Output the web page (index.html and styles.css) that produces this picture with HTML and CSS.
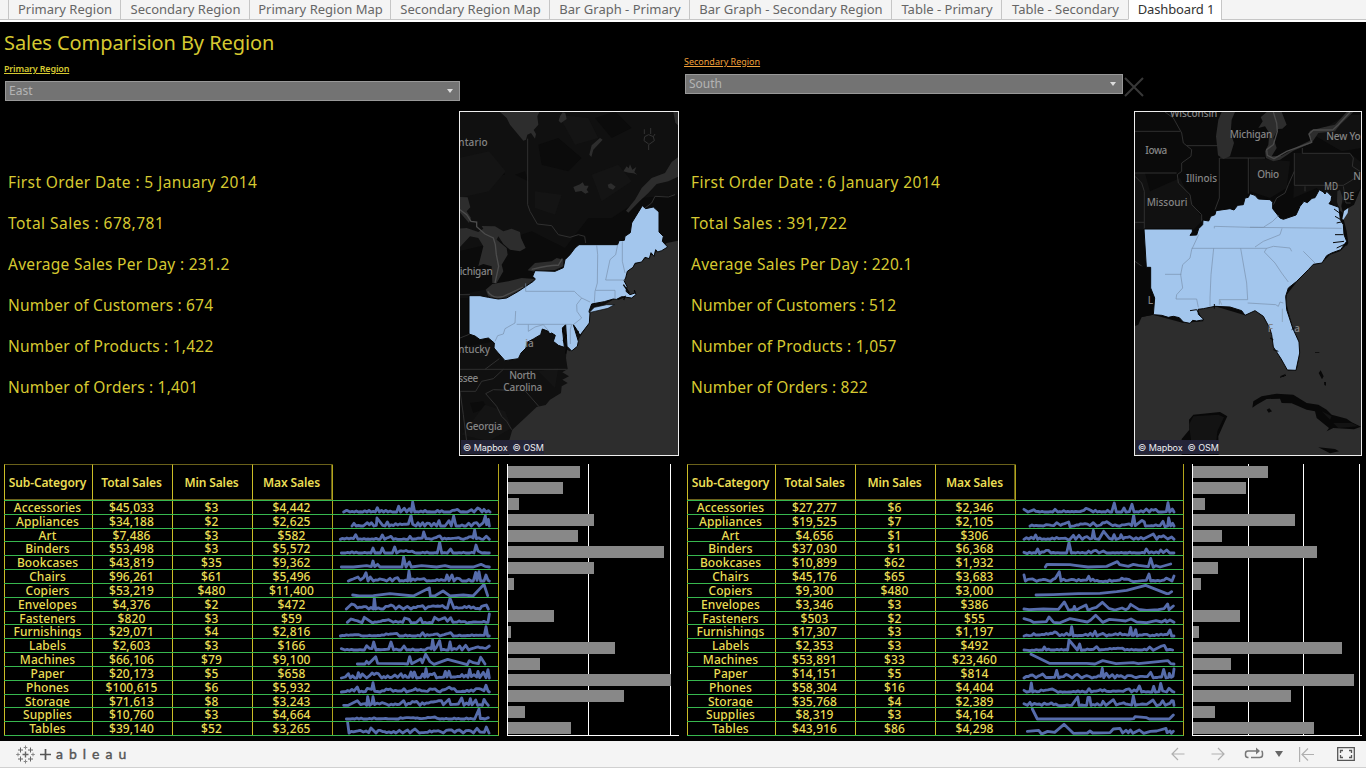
FILE: index.html
```html
<!DOCTYPE html>
<html lang="en">
<head>
<meta charset="utf-8">
<title>Sales Comparision By Region</title>
<link rel="stylesheet" href="styles.css">
</head>
<body>
<nav class="tabs">
  <span class="tab" style="width:112px">Primary Region</span>
  <span class="tab" style="width:129px">Secondary Region</span>
  <span class="tab" style="width:141px">Primary Region Map</span>
  <span class="tab" style="width:159px">Secondary Region Map</span>
  <span class="tab" style="width:140px">Bar Graph - Primary</span>
  <span class="tab" style="width:202px">Bar Graph - Secondary Region</span>
  <span class="tab" style="width:110px">Table - Primary</span>
  <span class="tab" style="width:127px">Table - Secondary</span>
  <span class="tab active" style="width:94px">Dashboard 1</span>
  <span class="tab-rest"></span>
</nav>

<main class="dash">
  <section class="half primary">
    <header class="head">
      <h1 class="title">Sales Comparision By Region</h1>
      <div class="label">Primary Region</div>
      <div class="select"><span>East</span><i class="caret"></i></div>
    </header>
    <div class="overview">
      <ul class="stats">
        <li>First Order Date : 5 January 2014</li><li>Total Sales : 678,781</li><li>Average Sales Per Day : 231.2</li><li>Number of Customers : 674</li><li>Number of Products : 1,422</li><li>Number of Orders : 1,401</li>
      </ul>
      <div class="map">
        <svg width="218" height="343" viewBox="15 12 654 1029">
          <rect x="0" y="0" width="700" height="1050" fill="#101010"/>
          <path fill="#0b0b0b" d="M12 430L140 400 230 370 330 420 400 330 470 330 560 270 672 260V400L380 470 220 520 12 560ZM250 110l60-20 70 60-40 40-80-20ZM420 30l60-20 50 50-60 30ZM100 170l40 5 10 25-35 5ZM180 200l30-10 10 30ZM12 570H120V700L12 720ZM45 885l40-5 10 20-40 15Z"/>
          <path fill="#141414" d="M12 150l90-20 50 60-50 60-90 20ZM310 20l90 10 30 60-70 20ZM410 200l80-30 40 50-90 60ZM240 250l80 10-20 60-60-20ZM90 890l60 20 20 50-70 40-80-20ZM250 790l60-10-10 60Z"/>
          <g fill="#2d2d2d">
            <path d="M135 12L155 30 165 50 190 80 205 98 213 95 217 80 228 75 240 92 243 78 236 66 250 50 247 25 253 12Z"/>
            <path d="M12 267L38 268 46 298 35 310 48 330 42 345 12 310Z"/>
            <path d="M12 362L35 360 70 372 85 362 80 354 120 355 145 370 170 362 195 372 198 390 212 420 195 430 165 425 145 408 130 385 125 395 155 420 158 440 140 470 145 490 125 525H112L110 475 85 468 70 474 80 435 85 415 70 390 45 385 12 420Z"/>
            <path d="M218 487L240 465 290 460 305 450 325 455 325 475 300 486 240 491ZM92 545L112 528 160 520 200 510 240 513 205 540 155 570 125 573 100 565Z"/>
            <path d="M669 148L650 162 630 195 590 210 560 240 540 275 513 308 520 314 555 278 580 255 605 228 640 220 672 205Z"/>
            <path d="M403 140L410 112 435 90 443 95 415 125 409 147ZM315 25l8-12 8 2 4 18-17 12-7-7ZM355 237l20-8 8-6 6 10 12 0-6 12 6 8-10 4-12-8-18 3ZM505 190l10-15 6 6 4-12 7 16 12-8-6 15 9 8-12-4-14-2ZM458 230l10-4 14 10-8 9-13-5ZM655 12l14 0v40l-8-8Z"/>
            <path d="M672 398L635 405 600 435 530 475 510 500 510 540 500 560 405 615 398 650 370 695 345 730 335 725 333 750 338 783 322 793 342 805 322 815 338 825 320 835 318 855 285 875 272 891 245 897 210 930 172 965 162 1000V1050H690V398Z"/>
          </g>
          <g fill="none" stroke="#4c4c4c" stroke-width="4"><path d="M12 303L35 320 48 340 65 342 65 356 90 378 115 390 121 410 124 440 131 475 120 525M98 550Q112 574 145 565L205 537M230 484Q290 470 310 472L322 452"/><path stroke="#333" stroke-width="3" d="M581 108l-14-10 2-12 12-6 14 6 3 12-17 12v16M568 78v-14M587 78v-18M595 86l5-8"/></g>
          <g fill="none" stroke="#303030" stroke-width="3"><path d="M218 92V290L225 310 247 348 290 353 310 380 345 388 370 380 389 385 392 405M570 300L590 285 600 265 640 267 660 260M15 784H335M15 850H62L80 820 115 812 145 784M90 784L133 752M92 857L115 845 210 848 252 896M92 857L125 895 140 925 155 940 170 965M15 850L25 920 35 1000M15 560H45M15 690L45 678"/></g>
          <path fill="#a3c6ed" stroke="#070707" stroke-width="3" d="M372 410H488L492 398 508 397 510 385 526 374 530 345 562 293 572 302 595 297 612 312V372L625 385 622 400 638 417 620 428 608 432 602 425 597 445 588 434 583 452 570 448 560 462 540 466 534 478 517 490 512 510 507 518 516 535 513 550 525 560 540 555 538 546 543 560 530 570 500 566 485 574 475 573 448 581 410 588 402 610 405 615 403 645 375 682 363 661 355 650 370 700 367 715 350 729 336 715 332 650 322 660 328 718 310 712 295 700 301 682 290 675 284 678 280 670 262 663 257 680 235 693 216 703 213 720 198 735 190 752 150 758 128 733 117 720 118 705 100 690 75 695 60 684 42 678V563H75L100 568 130 573 155 570 190 550 235 520 241 513 233 505 240 488 300 490 325 479 330 455 345 440 360 420Z"/>
          <path fill="#a3c6ed" stroke="#070707" stroke-width="2" d="M402 614L418 598 455 590 478 590 459 601Z"/>
          <path fill="none" stroke="#060606" stroke-width="4" d="M330 655l-7 15 10 12-8 15 10 20-3 20M488 574l22-8-4 10M505 530l18 25M363 675l8-5"/>
          <path fill="none" stroke="#7990aa" stroke-width="2" d="M425 411L428 440 427 525M488 410L482 440 465 455 452 516H510M502 400V460L510 495M427 525L420 550 418 585M422 547H480V571M212 526V550H358L368 560 380 570 405 582M380 570L365 590 366 610 380 630 355 650M185 649H350L346 665V708M220 650V670L240 657 265 650 282 670M182 609L180 645 150 662 145 678 128 683 120 700"/>
          <g class="map-text"><text x="10" y="115" textLength="88">ntario</text><text x="14" y="500" textLength="99">ichigan</text><text x="10" y="736" textLength="95">ntucky</text><text x="10" y="821" textLength="60">ssee</text><text x="163" y="813" textLength="80">North</text><text x="145" y="849" textLength="117">Carolina</text><text x="32" y="966" textLength="110">Georgia</text><text x="211" y="717">ia</text></g>
        </svg>
        <div class="credit"><span>© Mapbox</span><span>© OSM</span></div>
      </div>
    </div>
    <div class="lower"><div class="grid" id="gridEast"></div><div class="chart" id="chartEast"></div></div>
  </section>

  <section class="half secondary">
    <header class="head">
      <div class="label">Secondary Region</div>
      <div class="select-row"><div class="select"><span>South</span><i class="caret"></i></div>
      <svg class="close" width="20" height="20" viewBox="0 0 20 20"><path d="M1 1L19 19M19 1L1 19" stroke="#383838" stroke-width="2" fill="none"/></svg></div>
    </header>
    <div class="overview">
      <ul class="stats">
        <li>First Order Date : 6 January 2014</li><li>Total Sales : 391,722</li><li>Average Sales Per Day : 220.1</li><li>Number of Customers : 512</li><li>Number of Products : 1,057</li><li>Number of Orders : 822</li>
      </ul>
      <div class="map">
        <svg width="226" height="343" viewBox="15 12 678 1029">
          <rect x="0" y="0" width="710" height="1050" fill="#0a0a0a"/>
          <path fill="#111" d="M15 195H45L60 250 150 210 190 290 220 335 190 365H15ZM495 135H660L695 165V240L620 300 560 240 490 270ZM360 150L480 160 470 240 420 270 360 250ZM550 80l100-60h45v100l-60 10Z"/>
          <g fill="#2d2d2d">
            <path d="M695 235L672 290 655 300 640 330 650 370 655 405 630 430 600 440 575 465 545 470 530 490 500 522 470 560 468 580 475 610 510 735 500 785 475 788 450 750 422 660 400 625 375 608 345 622 255 595 200 600 220 640 160 645 70 620 35 627 25 650 12 655V1050H700Z"/>
            <path d="M275 12H315L305 35 302 75 312 105 300 145 280 153 264 142 258 85 265 35ZM385 60L398 40 392 28 410 12H455L470 50 457 62 444 63 430 90 440 120 425 145 455 143 505 115 545 95 535 80 540 68 580 58 615 50 650 12H670L630 50 615 70 565 75 545 105 490 128 450 155 430 160 408 150 405 130 415 110 418 75 405 55Z"/>
            <path d="M622 250l8-5 8 25-4 25 5 20-10-8-8-25Z"/>
          </g>
          <path fill="none" stroke="#4b4b4b" stroke-width="4" d="M430 12L440 45 442 70 430 110 410 125 412 142 432 152 470 130 545 103 537 78 550 66H608L625 50 660 12"/>
          <g fill="none" stroke="#303030" stroke-width="3"><path d="M15 70H150M105 12L130 30 155 75 160 105 185 125 183 145 155 165 155 190 142 200 145 225 180 260 185 290 215 320 215 340M15 195H140M170 113H265M268 150V270L255 305M15 205L35 225 43 250V363M270 150H405M355 150V257M493 135V232M493 190L475 230 465 255 440 270 430 290M517 120V136H660L670 150 667 175 690 190M493 232H640L660 220 675 210M525 235V250M640 235L648 285H662M15 343H43M15 460L40 478"/></g>
          <g fill="#080808"><path d="M12 475H62V540L75 570 70 620 35 627 15 650Z"/>
          <path d="M155 993L178 965 177 935 190 920 270 912 292 925 285 940 265 985 266 1044H155Z"/>
          <path d="M367 899L370 880 395 865 440 857 490 860 530 885 565 890 590 905 605 920 650 932 665 943 693 956 672 964 610 960 590 970 597 960 560 930 555 910 530 905 485 886 455 885 450 872 410 873 380 890ZM410 905l8-4 8 9-10 4ZM565 1018L615 1023 627 1030 600 1036ZM566 795l6-8 9 18-5 9ZM582 822l6 0 0 11-5-2ZM555 732h13v2h-13ZM600 738v8M450 805l18-8-8 10Z"/></g>
          <path fill="#131313" d="M190 925L265 920 282 928 262 970 258 1010 185 1010 177 950ZM575 910l30 15-5 10ZM610 945l55 0 20 10-60 5Z"/>
          <path fill="#a3c6ed" stroke="#070707" stroke-width="3" d="M42 363H187V372L180 382 200 381 206 362 218 350 219 336 236 339 242 325 255 320 258 308 300 302 312 306 323 292 340 290 345 270 355 268 360 257 375 262 385 273 420 275 428 283 428 302 450 330 460 334 498 321 510 295 522 280 532 284 546 271 555 269 568 245 580 252 585 258 590 250 605 265 603 279 597 287 627 298 631 335 640 350 642 380 650 400 632 425 605 435 590 443 576 465 550 469 535 485 500 520 475 540 467 565 470 605 488 660 507 702 509 735 498 787 472 786 453 752 430 717 425 680 419 660 400 625 375 608 345 622 335 608 300 597 255 595 220 602 204 604 205 619 222 635 200 639 188 637 180 646 160 642 148 629 130 625 115 628 95 622 70 620 74 570 62 540V478H49Z"/>
          <path fill="#a3c6ed" d="M637 333l5-24 13-9-2 15-13 20Z"/>
          <path fill="none" stroke="#070707" stroke-width="3" d="M612 303l18 13M615 325l16 9M620 345l18-4M615 380h25M609 404l33-4M620 420l32-15-2 8M180 608l20-3 7 12M253 588v14M420 690l10 5M430 725l15 5M485 665l8-6M450 808l18-6"/>
          <path fill="none" stroke="#7990aa" stroke-width="2" d="M253 361V355L360 358H400L428 340 445 323M360 358L635 361M456 361L450 380 400 400 375 417M185 421H410L430 415 480 420 485 430M520 430L555 465M410 421L403 432 435 465 455 495 475 522M206 380L185 425 180 450 158 470 152 500 158 540 140 560 138 573H200L205 598M105 499H154M251 421L243 500 240 570V595M332 421L350 525 353 575H268V590M353 585L437 590 445 595 450 582 460 585"/>
          <path fill="none" stroke="#8fa8c1" stroke-width="3" d="M268 573L275 590M457 602v40"/>
          <g class="map-text"><text x="120" y="26" textLength="142">Wisconsin</text><text x="299" y="89" textLength="128">Michigan</text><text x="589" y="95" textLength="103">New Yo</text><text x="46" y="138" textLength="66">Iowa</text><text x="168" y="222" textLength="93">Illinois</text><text x="382" y="211" textLength="65">Ohio</text><text x="50" y="294" textLength="122">Missouri</text><text x="583" y="245" textLength="41" lengthAdjust="spacingAndGlyphs">MD</text><text x="640" y="277" textLength="32" lengthAdjust="spacingAndGlyphs">DE</text><text x="670" y="216">N.</text><text x="53" y="587">L</text><text x="413" y="671">F</text><text x="493" y="671">a</text></g>
        </svg>
        <div class="credit"><span>© Mapbox</span><span>© OSM</span></div>
      </div>
    </div>
    <div class="lower"><div class="grid" id="gridSouth"></div><div class="chart" id="chartSouth"></div></div>
  </section>
</main>

<footer class="bar">
  <svg class="mark" width="19" height="19" viewBox="0 0 19 19" fill="none" stroke="#666" stroke-width="1"><path stroke-width="1.400" d="M9.5 6.500v6M6.500 9.500h6"/><path d="M4.500 2.500v5M2 5h5M14.500 2.500v5M12 5h5M4.500 11.500v5M2 14h5M14.500 11.500v5M12 14h5"/><path stroke="#888" d="M9.500 .5v4M7.700 2.500h3.600M9.500 14.500v4M7.700 16.500h3.600M2 7.700v3.600M.2 9.500h3.600M17 7.700v3.600M15.200 9.500h3.600"/></svg>
  <svg class="plus" width="11" height="11" viewBox="0 0 11 11"><path d="M5.500 0v11M0 5.500h11" stroke="#555" stroke-width="1.700"/></svg>
  <span class="word">ableau</span>
  <div class="tools">
    <svg width="14" height="14" viewBox="0 0 14 14" fill="none" stroke="#b0b0b0"><path stroke-width="1.2" d="M13.500 7H1M7 1L1 7l6 6"/></svg>
    <svg width="14" height="14" viewBox="0 0 14 14" fill="none" stroke="#b0b0b0"><path stroke-width="1.2" d="M.5 7H13M7 1l6 6-6 6"/></svg>
    <svg width="20" height="14" viewBox="0 0 20 14" fill="none" stroke="#777"><path stroke-width="1.500" d="M4.500 10.500H4Q1.500 10.500 1.500 8V6.500Q1.500 4 4 4H13M7 10.500H15.500Q18.500 10.500 18.500 8V6Q18.500 4.500 17.500 4"/><path fill="#777" stroke="none" d="M12 .5l4 3.500-4 3.500z"/></svg>
    <svg width="8" height="6" viewBox="0 0 8 6"><path d="M0 0h8L4 6z" fill="#666"/></svg>
    <svg width="15" height="15" viewBox="0 0 15 15" fill="none" stroke="#b0b0b0"><path stroke-width="1.2" d="M.6 0v15M15 7.500H3M9 1.500L3 7.500l6 6"/></svg>
    <svg width="18" height="14" viewBox="0 0 18 14" fill="none" stroke="#555"><path stroke-width="1.300" d="M.7 .7h16.600v12.600H.7zM3.500 6V3.500H6M12 3.500h2.500V6M14.500 8v2.500H12M6 10.500H3.500V8"/></svg>
  </div>
</footer>
<script src="app.js"></script>
</body>
</html>
```

FILE: styles.css
```css
* { box-sizing: border-box; }
body { margin: 0; width: 1366px; height: 768px; overflow: hidden; background: #000; font-family: "Noto Sans", "Open Sans", sans-serif; display: flex; flex-direction: column; }
.tabs { height: 22px; background: #fff; display: flex; padding-bottom: 2px; padding-left: 0; }
.tabs::before { content: ""; width: 8px; background: #f4f4f4; border-bottom: 1px solid #c6c6c6; }
.tab { flex: none; height: 20px; background: #f4f4f4; border-left: 1px solid #c6c6c6; border-bottom: 1px solid #c6c6c6; color: #666; font-size: 13px; line-height: 18px; text-align: center; white-space: nowrap; padding-left: 1px; }
.tab.active { background: #fff; border-bottom-color: #fff; color: #333; letter-spacing: -.15px; }
.tab-rest { flex: 1; background: #f4f4f4; border-left: 1px solid #c6c6c6; border-bottom: 1px solid #c6c6c6; margin-left: -1px; }

.dash { height: 719px; display: flex; background: #000; color: #d6c931; }
.half { display: flex; flex-direction: column; }
.primary { width: 683px; padding-left: 4px; }
.secondary { width: 683px; padding-left: 4px; }
.head { height: 89px; }
.title { margin: 0; padding-top: 7px; height: 41px; font-size: 20px; font-weight: 400; line-height: 28px; letter-spacing: -.07px; white-space: nowrap; }
.label { font-size: 9px; line-height: 12px; font-weight: 600; letter-spacing: -.17px; text-decoration: underline; white-space: nowrap; }
.primary .label { height: 18px; }
.secondary .head { padding-top: 33px; margin-left: -3px; }
.secondary .label { color: #f0a03a; font-weight: 400; letter-spacing: 0; height: 18px; line-height: 14px; }
.select { display: flex; align-items: center; justify-content: space-between; width: 455px; height: 20px; margin-left: 1px; border: 1px solid #999; background: #737373; color: #b4b4b4; font-size: 12px; line-height: 18px; padding: 0 6px 0 3px; }
.secondary .select { width: 438px; }
.select-row { display: flex; align-items: flex-start; padding-top: 1px; }
.close { margin-top: 3px; margin-left: 1px; }
.caret { border: 3.5px solid transparent; border-top: 4px solid #ddd; border-bottom: 0; }

.overview { height: 345px; display: flex; justify-content: space-between; }
.stats { list-style: none; margin: 0; padding: 51px 0 0 4px; font-size: 15.500px; line-height: 41px; white-space: nowrap; }
.stats li:nth-child(1) { letter-spacing: .39px; }
.stats li:nth-child(2) { letter-spacing: .48px; }
.stats li:nth-child(3) { letter-spacing: .29px; }
.stats li:nth-child(4) { letter-spacing: .17px; }
.stats li:nth-child(5) { letter-spacing: .23px; }
.stats li:nth-child(6) { letter-spacing: .2px; }
.map { position: relative; width: 220px; height: 345px; border: 1px solid #eee; }
.primary .overview { padding-right: 4px; }
.secondary .map { width: 228px; }
.secondary .overview { padding-right: 4px; }
.map svg { display: block; }
.map-text { fill: #858585; font-size: 30px; font-weight: 500; }
.credit { position: absolute; left: 1px; bottom: 1px; width: 83px; height: 14px; display: flex; gap: 5px; padding-left: 2px; background: #242438; color: #eee; font: 9px/15px Inter, sans-serif; letter-spacing: -.06px; white-space: nowrap; }

.lower { display: flex; height: 285px; padding-top: 8px; }
.grid { width: 495px; height: 272px; display: flex; flex-direction: column; }
.secondary .grid { width: 497px; }
.row { display: grid; grid-template-columns: 88px 80px 80px 80px 1fr; border-bottom: 1px solid #37b84e; color: #eade55; font-size: 12px; font-weight: 500; line-height: 13px; letter-spacing: .08px; text-align: center; border-right: 1px solid #b3a51b; }
.cell { border-left: 1px solid #cbbd26; height: 100%; overflow: hidden; min-width: 0; padding-right: 2px; }
.row .spark { border-left-color: #b3a51b; padding: 0; }
.row.th { height: 37px; font-weight: 600; font-size: 12px; letter-spacing: -.12px; }
.th .cell { border-top: 1px solid #6a611a; box-shadow: inset 0 -1px #6a611a; line-height: 36px; }
.th .cell:nth-child(4) { box-shadow: inset -1px -1px #6a611a; }
.th .spark { border-top-color: transparent; box-shadow: none; }
.spark svg { display: block; }
.spark polyline { fill: none; stroke: #566cab; stroke-width: 8.500; stroke-linejoin: round; stroke-linecap: round; }

.chart { margin-left: 8px; height: 272px; width: 172px; border-left: 1px solid #fff; border-bottom: 1px solid #fff; padding-top: 2px; display: flex; flex-direction: column; gap: 4px; background: linear-gradient(#fff, #fff) 80px 0 / 1px 100% no-repeat, linear-gradient(#fff, #fff) 162px 0 / 1px 100% no-repeat; }
.secondary .chart { width: 170px; background: linear-gradient(#fff, #fff) 55px 0 / 1px 100% no-repeat, linear-gradient(#fff, #fff) 110px 0 / 1px 100% no-repeat, linear-gradient(#fff, #fff) 166px 0 / 1px 100% no-repeat; }
.hbar { height: 12px; flex: none; background: #888; }

.bar { height: 27px; flex: none; background: #f4f4f4; border-bottom: 1px solid #d0d0d0; display: flex; align-items: center; padding-left: 16px; }
.plus { margin-left: 5px; }
.word { margin-left: 5px; font: 14px/24px Lato, sans-serif; letter-spacing: 6px; color: #555; -webkit-text-stroke: .4px #555; }
.tools { margin-left: auto; display: flex; align-items: center; padding-right: 11px; }
.tools svg:nth-child(2) { margin-left: 26px; }
.tools svg:nth-child(3) { margin-left: 19px; }
.tools svg:nth-child(4) { margin-left: 11px; }
.tools svg:nth-child(5) { margin-left: 16px; }
.tools svg:nth-child(6) { margin-left: 23px; }
```

FILE: app.js
```js
const heights = [14, 14, 13, 14, 14, 14, 14, 14, 13, 14, 14, 14, 14, 14, 13, 14, 14];
const names = ['Accessories', 'Appliances', 'Art', 'Binders', 'Bookcases', 'Chairs', 'Copiers', 'Envelopes', 'Fasteners', 'Furnishings', 'Labels', 'Machines', 'Paper', 'Phones', 'Storage', 'Supplies', 'Tables'];

const east = {
  total: ['45,033', '34,188', '7,486', '53,498', '43,819', '96,261', '53,219', '4,376', '820', '29,071', '2,603', '66,106', '20,173', '100,615', '71,613', '10,760', '39,140'],
  min: [3, 2, 3, 3, 35, 61, 480, 2, 3, 4, 3, 79, 5, 6, 8, 3, 52],
  max: ['4,442', '2,625', '582', '5,572', '9,362', '5,496', '11,400', '472', '59', '2,816', '166', '9,100', '658', '5,932', '3,243', '4,664', '3,265'],
  bars: [72, 55, 11, 86, 70, 156, 86, 6, 0, 46, 3, 107, 32, 163, 116, 17, 63],
  origin: 9,
  // Each series: jitter amplitude, then "x,height" points along the baseline.
  lines: [
    [3, '41,0 50,5 60,0 136,0 142,13 148,0 200,0 206,17 212,0 223,11 230,0 238,10 244,0 248,30 254,0 360,0 382,8 392,0 412,0 424,7 432,0 443,12 450,8 456,0 462,8 468,0 475,4 480,0'],
    [3, '66,0 72,8 78,0 100,0 112,10 118,4 124,10 132,0 139,2 141,24 158,2 165,0 172,12 178,0 235,6 243,32 248,5 258,0 264,10 270,0 278,10 284,0 298,8 304,0 312,8 320,0 327,16 332,0 345,0 357,16 364,0 371,30 378,0 408,0 416,8 424,0 440,10 448,0 460,10 466,30 470,4 475,20 478,0'],
    [2, '31,0 70,2 77,14 84,0 150,0 157,13 164,0 183,9 190,0 234,0 240,9 246,0 277,4 281,22 288,2 305,0 330,10 337,0 380,4 400,0 424,8 429,4 434,28 439,2 460,0 469,9 478,0'],
    [2, '34,0 123,0 129,15 135,0 151,0 157,15 164,0 187,0 194,18 200,0 210,6 240,4 260,0 322,0 329,32 335,0 352,0 362,12 369,0 432,0 438,24 444,6 456,0 478,0'],
    [0, '34,0 70,0 110,4 124,1 129,18 134,1 143,8 150,0 216,0 221,30 228,0 238,15 244,0 275,4 320,0 345,4 362,0 412,0 430,0 453,8 465,2 478,0'],
    [3, '55,0 84,12 91,3 101,10 108,25 114,0 121,12 130,0 155,5 170,0 180,8 187,0 203,10 209,0 233,0 237,30 242,0 282,7 290,0 346,2 351,18 357,1 366,18 372,0 388,7 396,0 430,0 437,26 441,2 447,28 452,0 462,0 468,18 474,2 478,0'],
    [0, '68,0 88,-3 130,-2 180,4 250,-3 298,21 301,-3 315,-2 339,12 360,-3 400,0 429,-3 462,32 473,-2'],
    [3, '49,0 65,15 82,3 108,7 116,0 130,0 133,34 137,0 160,0 183,12 197,0 207,9 220,0 232,8 243,0 278,10 286,0 303,8 330,8 352,2 360,32 372,2 410,4 450,0 455,8 469,12 475,0'],
    [2, '52,0 63,10 96,-1 103,15 128,-2 176,8 190,0 218,0 224,13 237,9 244,-2 260,0 272,12 278,-2 306,-2 314,15 326,7 345,14 352,3 362,14 369,0 405,2 412,-3 430,1 474,0 478,25'],
    [2, '31,0 80,4 100,0 150,1 200,8 208,0 270,0 278,10 285,0 322,6 330,0 362,10 370,0 463,2 468,28 473,0 478,0'],
    [2, '34,4 45,0 103,0 110,13 118,5 126,4 131,24 138,0 170,2 176,3 183,24 191,0 213,0 222,12 230,0 285,0 300,6 304,3 308,30 313,0 319,8 329,28 334,0 355,0 360,24 365,0 380,2 389,12 396,0 407,14 416,0 438,8 468,5 478,12'],
    [0, '82,0 105,0 110,8 116,1 137,22 143,2 220,1 233,0 239,22 245,1 272,15 277,4 287,29 300,7 312,-1 353,14 412,-2 418,10 430,4 445,1 452,20 465,0'],
    [6, '34,0 46,3 55,13 61,0 81,0 85,16 91,2 97,12 110,0 120,8 145,13 155,0 185,2 195,9 203,2 213,13 219,2 237,2 243,18 248,2 253,18 260,0 284,2 288,28 293,3 313,14 320,0 341,3 346,20 351,3 357,20 363,2 390,4 414,2 419,26 424,4 440,3 444,20 449,1 460,17 468,1 474,25 478,0'],
    [3, '34,0 72,3 82,15 88,0 106,1 112,11 125,8 129,28 134,2 150,0 181,9 190,2 215,3 222,10 230,0 250,6 293,2 307,8 330,0 350,10 365,9 380,1 430,2 447,10 462,4 468,20 474,3 478,0'],
    [4, '41,0 55,0 82,14 92,2 106,5 110,0 113,26 119,0 126,5 129,26 134,2 163,6 177,0 208,3 221,14 228,0 260,12 270,0 309,10 320,12 334,14 340,2 357,18 362,2 385,4 395,22 402,0 416,2 421,20 426,1 437,16 443,0 457,0 462,18 468,8 475,0'],
    [2, '49,0 125,0 160,1 205,0 230,4 275,1 307,5 330,0 434,0 447,30 451,1 465,0 475,4'],
    [3, '53,31 57,0 90,8 100,3 116,1 123,15 138,0 145,8 170,1 198,0 208,8 218,0 233,9 240,0 255,12 268,0 305,3 325,7 340,0 357,9 374,2 388,9 400,0 416,8 430,0 441,14 450,3 463,2 469,18 477,0']
  ]
};

const south = {
  total: ['27,277', '19,525', '4,656', '37,030', '10,899', '45,176', '9,300', '3,346', '503', '17,307', '2,353', '53,891', '14,151', '58,304', '35,768', '8,319', '43,916'],
  min: [6, 7, 1, 1, 62, 65, 480, 3, 2, 3, 3, 33, 5, 16, 4, 3, 86],
  max: ['2,346', '2,105', '306', '6,368', '1,932', '3,683', '3,000', '386', '55', '1,197', '492', '23,460', '814', '4,404', '2,389', '4,164', '4,298'],
  bars: [75, 53, 12, 102, 29, 124, 25, 8, 0, 47, 6, 149, 38, 161, 98, 22, 121],
  origin: 18,
  lines: [
    [3, '42,8 54,0 65,4 90,0 128,0 135,8 143,0 210,1 234,9 250,0 305,0 313,27 319,0 335,0 342,12 348,0 358,1 366,23 372,0 400,0 409,9 418,0 437,8 445,0 455,0 469,1 474,28 479,0 487,9 492,0'],
    [2, '60,0 90,1 100,0 109,4 131,1 140,10 152,2 176,12 180,-2 225,7 240,1 250,10 260,0 272,3 290,13 308,1 330,0 350,5 365,1 371,32 376,1 396,17 403,12 406,0 450,1 459,14 465,-2 473,0 476,24 482,0 488,8 492,0'],
    [4, '42,0 71,2 77,13 83,0 120,0 160,3 178,-2 190,12 197,0 207,12 217,0 231,8 240,1 246,3 250,27 255,2 267,0 281,24 298,3 307,0 312,14 318,0 330,4 333,14 340,2 359,8 371,0 400,1 430,16 440,0 460,11 473,1 485,7 492,0'],
    [2, '42,2 52,-2 77,0 83,12 89,-2 115,8 123,0 170,0 177,31 184,0 230,0 236,6 243,0 258,8 267,0 280,6 290,0 403,0 409,12 417,0 446,0 452,9 460,1 470,9 479,0 492,0'],
    [0, '106,0 111,8 180,7 195,5 234,0 290,2 322,16 329,7 355,2 370,8 385,5 415,1 422,26 430,-1 437,4 450,0 482,9'],
    [3, '42,18 46,0 54,5 68,6 80,-1 100,5 122,-1 136,8 148,28 153,0 174,2 185,5 200,0 230,3 236,14 242,1 280,-2 305,-1 348,6 370,-2 398,1 409,2 417,21 422,0 450,0 475,6 486,0 492,15'],
    [0, '78,0 130,1 205,4 270,5 320,10 350,14 407,29 470,4 476,4 485,10'],
    [0, '42,0 57,-2 100,0 145,-1 163,21 176,-4 190,-1 193,8 198,-4 211,4 228,12 234,-4 245,1 259,5 277,20 296,2 315,-3 336,3 347,-2 355,2 362,14 386,-1 410,-4 445,-2 462,1 473,15 477,-2 490,9'],
    [0, '42,11 60,6 70,0 109,2 117,16 131,0 148,-2 180,11 232,1 242,7 257,21 278,0 298,9 331,6 347,4 363,10 380,1 410,-1 438,5 455,1 466,7 470,1 480,7 492,0'],
    [4, '42,0 65,2 90,3 115,5 140,10 149,1 176,3 181,4 185,28 190,0 220,2 248,1 255,14 261,0 279,8 290,0 310,4 357,3 362,26 366,2 371,2 377,19 381,0 410,5 420,0 472,4 480,18 485,0 492,0'],
    [2, '42,0 60,-2 98,0 103,9 109,0 173,0 177,30 202,0 209,18 214,-1 250,2 260,10 268,0 330,5 345,0 410,0 419,9 430,-1 455,12 463,14 470,0 480,2 488,0'],
    [0, '63,29 118,2 230,2 255,0 278,10 318,1 370,4 385,1 474,10 482,1 492,0'],
    [4, '42,0 68,9 78,1 98,12 108,1 134,2 140,23 146,0 175,8 187,0 202,11 215,0 230,7 246,0 272,5 277,29 281,1 289,14 297,2 307,10 315,0 333,7 345,0 360,7 378,1 390,5 412,4 422,17 430,0 455,3 461,26 468,0 476,2 478,14 484,2 489,5 492,27'],
    [3, '42,5 50,0 60,2 64,27 68,0 87,1 127,9 144,-1 184,0 230,0 237,10 244,0 265,4 302,1 325,3 340,2 350,8 365,0 380,2 388,18 395,0 426,0 431,17 436,0 447,1 452,26 458,3 470,0 477,11 487,2 492,0'],
    [3, '42,5 52,0 60,9 65,0 88,4 95,0 118,4 150,-1 185,0 203,25 207,0 230,0 234,24 239,24 243,0 274,1 279,12 288,0 310,17 319,1 335,6 365,1 370,28 376,0 397,4 410,3 429,16 440,-1 450,2 458,14 466,0 480,6 485,14 490,13 492,0'],
    [0, '67,30 82,0 360,0 371,1 375,7 410,4 418,0 478,0 490,12'],
    [0, '52,5 86,8 95,-3 113,5 134,2 162,26 190,-1 232,0 240,6 248,0 300,1 310,12 330,14 338,0 348,8 355,1 361,9 369,-1 388,9 401,-1 421,5 440,6 468,14 471,1 480,6 484,-1 490,5']
  ]
};

function points(line, rowHeight) {
  const amp = line[0];
  const pts = line[1].split(' ').map(p => p.split(',').map(Number));
  const base = rowHeight * 3 - (rowHeight === 13 ? 8 : 9);
  const out = [];
  pts.forEach((p, i) => {
    out.push(p);
    const next = pts[i + 1];
    if (!next || !amp) return;
    const gap = next[0] - p[0];
    if (gap < 14 || Math.abs(next[1] - p[1]) > 12) return;
    const n = Math.floor(gap / 6);
    for (let k = 1; k < n; k++) {
      const x = p[0] + gap * k / n;
      const wave = Math.abs(Math.sin(x * 1.7) * Math.cos(x * .43));
      out.push([x, p[1] + (next[1] - p[1]) * k / n + wave * amp * (k % 2 ? 1.8 : 0)]);
    }
  });
  return out.map(([x, h]) => x.toFixed(1) + ',' + (base - h).toFixed(1)).join(' ');
}

function build(data, gridId, chartId, lineWidth) {
  let html = '<div class="row th"><div class="cell">Sub-Category</div><div class="cell">Total Sales</div><div class="cell">Min Sales</div><div class="cell">Max Sales</div><div class="cell spark"></div></div>';
  names.forEach((name, i) => {
    const h = heights[i];
    html += `<div class="row" style="height:${h}px"><div class="cell">${name}</div><div class="cell">$${data.total[i]}</div><div class="cell">$${data.min[i]}</div><div class="cell">$${data.max[i]}</div><div class="cell spark"><svg width="${lineWidth}" height="${h - 1}" viewBox="${data.origin} 0 ${lineWidth * 3} ${(h - 1) * 3}"><polyline points="${points(data.lines[i], h)}"/></svg></div></div>`;
  });
  document.getElementById(gridId).innerHTML = html;
  document.getElementById(chartId).innerHTML = data.bars.map(w => `<div class="hbar" style="width:${w}px"></div>`).join('');
}

build(east, 'gridEast', 'chartEast', 165);
build(south, 'gridSouth', 'chartSouth', 167);
```
